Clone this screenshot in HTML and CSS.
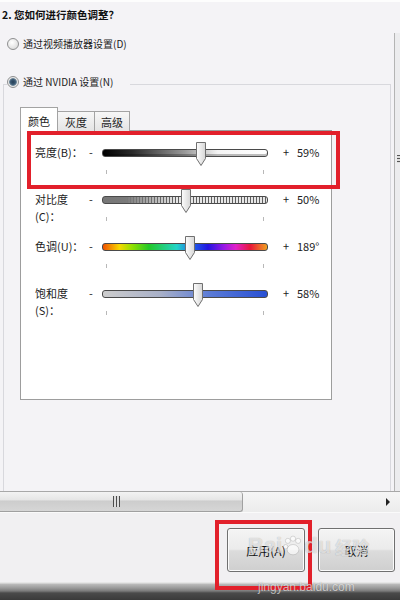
FILE: index.html
```html
<!DOCTYPE html>
<html>
<head>
	<meta charset="UTF-8"/>
	<link rel="stylesheet" href="styles.css">
</head>
<body>

<div class="top">
	<div class="title">2. 您如何进行颜色调整？</div>
</div>

<div class="middle">
	<div class="content">
		<label class="radio"><span class="dot"></span>通过视频播放器设置(D)</label>
		<fieldset class="group">
			<legend><label class="radio"><span class="dot on"></span>通过 NVIDIA 设置(N)</label></legend>
			<div class="tabs">
				<span class="tab on t1">颜色</span>
				<span class="tab t2">灰度</span>
				<span class="tab t3">高级</span>
			</div>
			<div class="panel">
				<div class="row">
					<div class="name">亮度(B)：</div>
					<div class="sign">-</div>
					<div class="slider">
						<div class="track bright">
							<svg class="thumb" style="left:59.5%" viewBox="0 0 12 24"><defs><linearGradient id="g1" x1="0" x2="1"><stop offset="0" stop-color="#fdfdfd"/><stop offset="1" stop-color="#d6d6d6"/></linearGradient></defs><path d="M1.5 0.5H10.5V16.5L6 23.5L1.5 16.5Z" fill="url(#g1)" stroke="#707070"/></svg>
						</div>
						<div class="ticks"><i></i><i></i></div>
					</div>
					<div class="sign plus">+</div>
					<div class="val">59%</div>
				</div>
				<div class="row">
					<div class="name">对比度<br>(C)：</div>
					<div class="sign">-</div>
					<div class="slider">
						<div class="track contrast">
							<svg class="thumb" style="left:50.5%" viewBox="0 0 12 24"><path d="M1.5 0.5H10.5V16.5L6 23.5L1.5 16.5Z" fill="url(#g1)" stroke="#707070"/></svg>
						</div>
						<div class="ticks"><i></i><i></i></div>
					</div>
					<div class="sign plus">+</div>
					<div class="val">50%</div>
				</div>
				<div class="row">
					<div class="name">色调(U)：</div>
					<div class="sign">-</div>
					<div class="slider">
						<div class="track hue">
							<svg class="thumb" style="left:53%" viewBox="0 0 12 24"><path d="M1.5 0.5H10.5V16.5L6 23.5L1.5 16.5Z" fill="url(#g1)" stroke="#707070"/></svg>
						</div>
						<div class="ticks"><i></i><i></i></div>
					</div>
					<div class="sign plus">+</div>
					<div class="val">189°</div>
				</div>
				<div class="row">
					<div class="name">饱和度<br>(S)：</div>
					<div class="sign">-</div>
					<div class="slider">
						<div class="track satur">
							<svg class="thumb" style="left:58%" viewBox="0 0 12 24"><path d="M1.5 0.5H10.5V16.5L6 23.5L1.5 16.5Z" fill="url(#g1)" stroke="#707070"/></svg>
						</div>
						<div class="ticks"><i></i><i></i></div>
					</div>
					<div class="sign plus">+</div>
					<div class="val">58%</div>
				</div>
			</div>
		</fieldset>
	</div>
	<div class="vscroll"><span class="vgrip"></span></div>
</div>

<div class="hscroll">
	<div class="hthumb"><i></i></div>
	<span class="arrow"></span>
</div>

<div class="footer">
	<button class="btn apply">应用(A)</button>
	<button class="btn cancel">取消</button>
</div>
<div class="bottombar"></div>

<!--标注框-->
<div class="mark mark1"></div>
<div class="mark mark2"></div>

<!--水印-->
<div class="watermark">
	<div class="wm1">Bai<svg class="paw" viewBox="0 0 30 30"><circle cx="8" cy="8" r="3.5"/><circle cx="15" cy="5" r="3.5"/><circle cx="22" cy="8" r="3.5"/><circle cx="5" cy="16" r="3"/><ellipse cx="15" cy="20" rx="8" ry="7"/></svg>du<span class="wmcn">经验</span></div>
	<div class="wm2">jingyan.baidu.com</div>
</div>

</body>
</html>
```

FILE: styles.css
```css
		*{
			margin:0;
			padding:0;
			box-sizing:border-box;
		}
		body{
			width:400px;
			height:600px;
			overflow:hidden;
			position:relative;
			background-color:#f4f3f6;
			font-family:"Noto Sans CJK SC","Liberation Sans",sans-serif;
			font-size:11px;
			color:#1c1c1c;
		}
		.top{
			height:33px;
			border-top:2px solid #fdfdfd;
		}
		.title{
			padding:5px 0 0 2px;
			line-height:16px;
			font-size:10.5px;
			font-weight:bold;
			color:#111;
		}
		.middle{
			display:flex;
			height:458px;
		}
		.content{
			width:394px;
			display:flex;
			flex-direction:column;
		}
		.radio{
			display:flex;
			align-items:center;
			gap:4px;
			line-height:16px;
			font-size:10px;
			white-space:nowrap;
		}
		.content>.radio{
			margin-top:3px;
			padding-left:7px;
		}
		.dot{
			width:12px;
			height:12px;
			border-radius:50%;
			border:1px solid #8e8f90;
			background:radial-gradient(circle at 40% 35%,#fff,#dedede 75%);
		}
		.dot.on{
			background:radial-gradient(circle,#243d55 0,#3c5a74 2.5px,#6f8799 3.5px,#e4e4e4 4.2px,#fafafa 6px);
		}
		.group{
			margin:22px 0 0 3px;
			width:388px;
			flex:1;
			min-height:0;
			border:1px solid #d8d8dd;
			border-bottom:none;
			padding:0 0 0 3px;
		}
		.group legend{
			padding:0 17px 4px 0;
		}
		.tabs{
			display:flex;
			align-items:flex-end;
			height:24px;
			margin:13px 0 -1px 13px;
			position:relative;
			z-index:1;
		}
		.tab{
			height:20px;
			line-height:20px;
			text-align:center;
			border:1px solid #a3a3a3;
			border-left:none;
			border-bottom:none;
			background:linear-gradient(#f7f7f7,#e4e4e4);
		}
		.tab.on{
			height:24px;
			line-height:26px;
			background:#fff;
			border-left:1px solid #a3a3a3;
		}
		.t1{width:38px;}
		.t2{width:37px;}
		.t3{width:35px;}
		.panel{
			margin-left:13px;
			width:312px;
			height:270px;
			background:#fff;
			border:1px solid #9d9d9d;
			padding:13px 0 0 14px;
		}
		.row{
			display:grid;
			grid-template-columns:54px 13px 166px 29px auto;
			height:47px;
			line-height:17px;
		}
		.plus{
			padding-left:15px;
		}
		.track{
			position:relative;
			height:8px;
			margin-top:5px;
			border:1px solid #4a4a4a;
			border-radius:3px;
		}
		.bright{
			background:linear-gradient(90deg,#000 0,#2a2a2a 18%,#9a9a9a 50%,#f4f4f4 70%,#fff 100%);
			box-shadow:inset 0 -2px 0 rgba(0,0,0,.25);
		}
		.contrast{
			background:
				linear-gradient(90deg,#777 0,#7a7a7a 14%,rgba(122,122,122,0) 45%),
				repeating-linear-gradient(90deg,#5e5e5e 0 1px,#e6e6e6 1px 3px);
		}
		.hue{
			background:linear-gradient(90deg,#f05000 0,#f7d800 10%,#8ee000 18%,#22c828 28%,#22d4c8 45%,#1e60e8 55%,#2214e0 64%,#9a18e4 74%,#e020c8 81%,#e81838 90%,#f0a020 100%);
		}
		.satur{
			background:linear-gradient(90deg,#cdcdcd 0,#a8b0c8 35%,#5b7bd6 65%,#2850d4 100%);
		}
		.thumb{
			position:absolute;
			top:-8px;
			margin-left:-6px;
			width:12px;
			height:24px;
		}
		.ticks{
			display:flex;
			justify-content:space-between;
			padding:0 4px;
			margin-top:13px;
		}
		.ticks i{
			width:1px;
			height:4px;
			background:#b8b8b8;
		}
		.vscroll{
			width:6px;
			border-left:1px solid #b4b4b4;
			background:#ececee;
			padding-top:122px;
		}
		.vgrip{
			display:block;
			margin-left:2px;
			width:3px;
			height:8px;
			background:repeating-linear-gradient(#555 0 1px,#ddd 1px 3px);
		}
		.hscroll{
			height:22px;
			display:flex;
			align-items:center;
			justify-content:space-between;
			border-top:1px solid #a8a8a8;
			border-bottom:1px solid #fafafa;
			background:linear-gradient(#f6f6f6,#ececec);
			padding-right:10px;
		}
		.hthumb{
			width:243px;
			height:20px;
			display:flex;
			align-items:center;
			padding-left:113px;
			border:1px solid #a0a0a0;
			border-left:none;
			border-top:none;
			border-radius:0 3px 3px 0;
			background:linear-gradient(#f3f3f3 0,#e6e6e6 40%,#cdcdcd 48%,#d6d6d6 100%);
		}
		.hthumb i{
			width:7px;
			height:11px;
			background:repeating-linear-gradient(90deg,#4c4c4c 0 1px,#dcdcdc 1px 3px);
		}
		.arrow{
			border-left:4px solid #222;
			border-top:4px solid transparent;
			border-bottom:4px solid transparent;
		}
		.footer{
			height:69px;
			display:flex;
			justify-content:flex-end;
			gap:13px;
			padding:15px 5px 0 0;
			background:#f1f0f2;
		}
		.btn{
			width:78px;
			height:44px;
			border:1px solid #707070;
			border-radius:3px;
			background:linear-gradient(#f4f4f4 0,#ebebeb 48%,#dcdcdc 52%,#cfcfcf 100%);
			box-shadow:inset 0 0 0 1px #fbfbfb;
			font-family:"Noto Sans CJK SC",sans-serif;
			font-size:12px;
			color:#111;
		}
		.cancel{
			width:77px;
		}
		.bottombar{
			height:18px;
			background:linear-gradient(#e6e6e6 0,#e6e6e6 1px,#bcbcbc 2px,#9a9a9a 6px,#7a7a7a 9px,#4a4a4a 11px,#3a3a3a 18px);
		}
		.mark{
			position:absolute;
			border:4px solid #e2202b;
		}
		.mark1{
			left:27px;
			top:131px;
			width:313px;
			height:58px;
		}
		.mark2{
			left:215px;
			top:520px;
			width:97px;
			height:70px;
		}
		.watermark{
			position:absolute;
			left:248px;
			top:532px;
			white-space:nowrap;
			color:rgba(255,255,255,.65);
			text-shadow:0 0 1px rgba(0,0,0,.3);
			font-family:"Liberation Sans","Noto Sans CJK SC",sans-serif;
		}
		.wm1{
			display:flex;
			align-items:center;
			height:28px;
			font-size:22px;
			font-weight:bold;
		}
		.wmcn{
			margin-left:4px;
			font-size:17px;
		}
		.paw{
			width:22px;
			height:22px;
			fill:rgba(255,255,255,.65);
			stroke:rgba(0,0,0,.18);
		}
		.wm2{
			margin-top:20px;
			padding-left:10px;
			font-size:12px;
			line-height:14px;
		}
```
